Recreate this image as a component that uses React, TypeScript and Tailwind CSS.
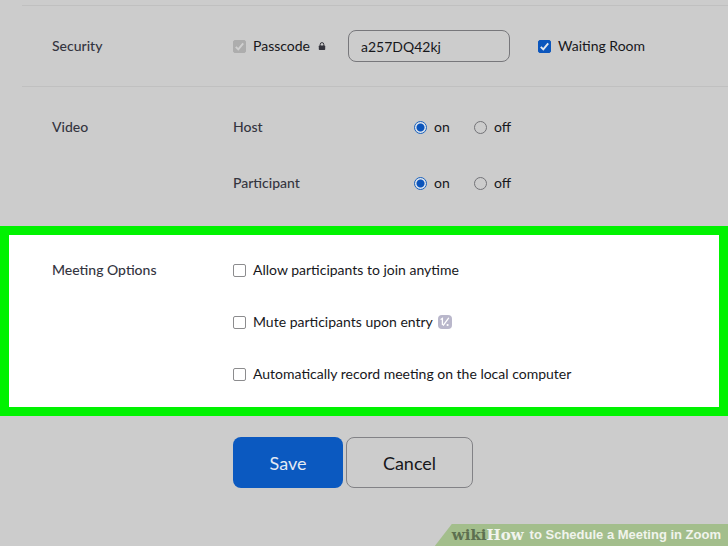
import type { ReactNode } from "react";

function Tick({ className }: { className: string }) {
  return (
    <svg viewBox="0 0 13 13" className={`pointer-events-none absolute inset-0 size-[13px] ${className}`} aria-hidden="true">
      <path d="M2.8 6.8 5.3 9.4 10.2 3.4" fill="none" stroke="currentColor" strokeWidth="1.9" />
    </svg>
  );
}

function Checkbox({ id, label, checked, disabled, children }: {
  id: string;
  label: string;
  checked?: boolean;
  disabled?: boolean;
  children?: ReactNode;
}) {
  return (
    <div className="flex items-center">
      <span className="relative mr-[7px] block size-[13px]">
        <input
          id={id}
          type="checkbox"
          defaultChecked={checked}
          disabled={disabled}
          className="peer block size-[13px] appearance-none rounded-[2px] border border-[#8c8c8e] checked:border-[#0b56bd] checked:bg-[#0b56bd] disabled:border-[#adadad] disabled:bg-[#adadad]"
        />
        <Tick className={`hidden peer-checked:block ${disabled ? "text-[#d0d0d0]" : "text-[#e4e8ee]"}`} />
      </span>
      <label htmlFor={id}>{label}</label>
      {children}
    </div>
  );
}

function Radio({ id, name, label, checked }: { id: string; name: string; label: string; checked?: boolean }) {
  return (
    <div className="flex w-[60px] items-center gap-[7px]">
      <input
        id={id}
        name={name}
        type="radio"
        defaultChecked={checked}
        className="block size-[13px] appearance-none rounded-full border border-[#737377] checked:border-[#1a62be] checked:bg-[radial-gradient(circle,#0b54bb_3.5px,#dce3ec_4.5px)]"
      />
      <label htmlFor={id}>{label}</label>
    </div>
  );
}

function VideoRow({ label, name }: { label: string; name: string }) {
  return (
    <div role="radiogroup" aria-label={label} className="flex h-5 items-center">
      <span className="w-[181px] font-medium text-[#34353f]">{label}</span>
      <Radio id={`${name}-on`} name={name} label="on" checked />
      <Radio id={`${name}-off`} name={name} label="off" />
    </div>
  );
}

function Lock() {
  return (
    <svg viewBox="0 0 8 8" className="ml-[8px] h-2 w-2" aria-label="Locked" role="img">
      <path d="M2.2 4V2.4a1.8 1.8 0 0 1 3.6 0V4" fill="none" stroke="#34343c" strokeWidth="1" />
      <rect x="0.8" y="3.4" width="6.4" height="4.6" rx="0.8" fill="#34343c" />
    </svg>
  );
}

function InfoBadge() {
  return (
    <svg viewBox="0 0 14 14" className="ml-[5px] size-[14px]" aria-label="More information" role="img">
      <rect width="14" height="14" rx="4" fill="#b9b7cb" />
      <path d="M3 4.2 4.4 3.4V9.4M10.6 3.2 5.4 10.2" fill="none" stroke="#fff" strokeWidth="1.3" strokeLinecap="round" />
      <circle cx="9.6" cy="10" r="1.1" fill="#fff" />
    </svg>
  );
}

export default function App() {
  return (
    <main className="flex min-h-screen flex-col bg-[#cccccc] pt-[5px] font-['Lato','Carlito',sans-serif] text-[14px] leading-5 text-[#17171b]">
      <section className="ml-[22px] flex h-[81px] items-center border-t border-[#c0c0c0] pl-[30px]">
        <h2 className="w-[181px] font-medium text-[#34353f]">Security</h2>
        <Checkbox id="passcode" label="Passcode" checked disabled>
          <Lock />
        </Checkbox>
        <input
          aria-label="Meeting passcode"
          defaultValue="a257DQ42kj"
          className="ml-[22px] h-8 w-[162px] rounded-lg border border-[#77777b] px-3"
        />
        <div className="ml-7">
          <Checkbox id="waiting" label="Waiting Room" checked />
        </div>
      </section>

      <section className="ml-[22px] flex border-t border-[#c0c0c0] pt-[30px] pb-[33px] pl-[30px]">
        <h2 className="w-[181px] font-medium text-[#34353f]">Video</h2>
        <div className="flex flex-col gap-9">
          <VideoRow label="Host" name="host" />
          <VideoRow label="Participant" name="participant" />
        </div>
      </section>

      <section className="flex border-[9px] border-[#00f200] bg-white pt-[25px] pb-[23px] pl-[43px]">
        <h2 className="w-[181px] font-medium text-[#34353f]">Meeting Options</h2>
        <div className="flex flex-col gap-8">
          <Checkbox id="join" label="Allow participants to join anytime" />
          <Checkbox id="mute" label="Mute participants upon entry">
            <InfoBadge />
          </Checkbox>
          <Checkbox id="record" label="Automatically record meeting on the local computer" />
        </div>
      </section>

      <div className="mt-[21px] flex gap-[3px] pl-[233px] text-[18px]">
        <button type="button" className="h-[51px] w-[110px] rounded-lg bg-[#0b59c0] text-[#e3eaf3]">Save</button>
        <button type="button" className="h-[51px] w-[127px] rounded-lg border border-[#828286]">Cancel</button>
      </div>

      <footer className="mt-auto flex h-[22px] items-center self-end bg-[#a3be8c] pr-[7px] pl-[17px] font-['Liberation_Sans',sans-serif] text-[13px] font-bold text-[#f1f4ed] [clip-path:polygon(17px_0,100%_0,100%_100%,0_100%)]">
        <span className="mr-[6px] font-['DejaVu_Serif',serif] text-[15px]">
          <span className="text-[#5d7050]">wiki</span>How
        </span>
        to Schedule a Meeting in Zoom
      </footer>
    </main>
  );
}
